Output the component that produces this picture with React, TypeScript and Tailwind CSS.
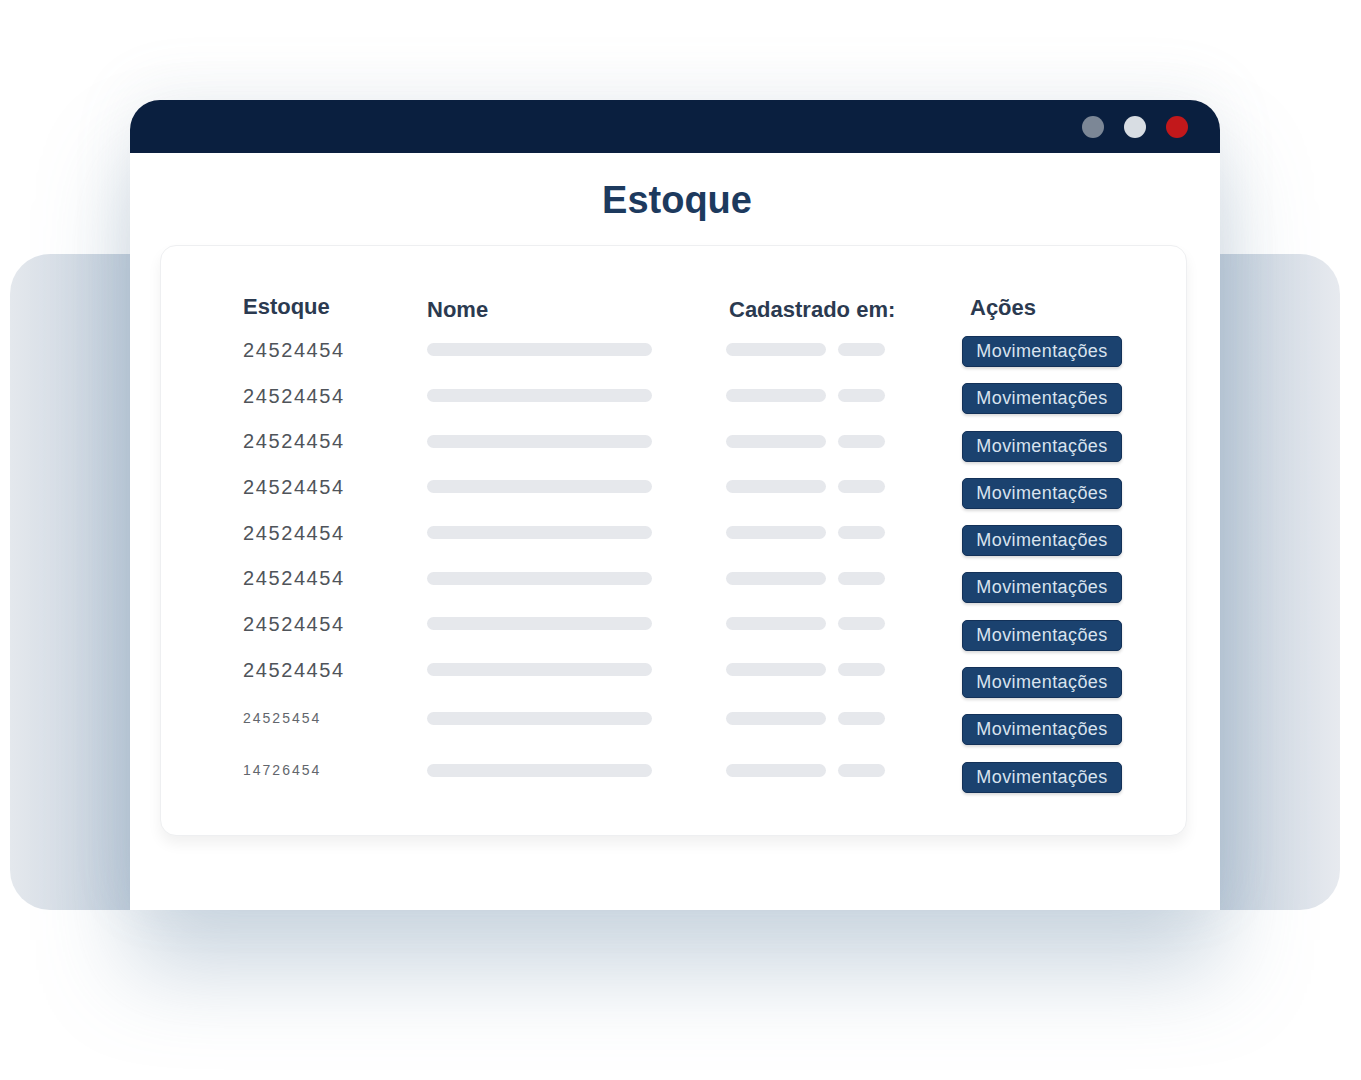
const rows = [
  { code: "24524454", h: "h-[45.7px]", small: false },
  { code: "24524454", h: "h-[45.7px]", small: false },
  { code: "24524454", h: "h-[45.7px]", small: false },
  { code: "24524454", h: "h-[45.7px]", small: false },
  { code: "24524454", h: "h-[45.7px]", small: false },
  { code: "24524454", h: "h-[45.7px]", small: false },
  { code: "24524454", h: "h-[45.7px]", small: false },
  { code: "24524454", h: "h-[45.7px]", small: false },
  { code: "24525454", h: "h-[51px]", small: true },
  { code: "14726454", h: "h-[53px]", small: true },
];

function Bar({ w }: { w: string }) {
  return <div className={`h-[13px] rounded-full bg-[#e6e8ec] ${w}`} />;
}

export default function App() {
  return (
    <main className="relative h-[1080px] w-full overflow-hidden bg-white font-['Liberation_Sans',Arial,sans-serif]">
      {/* painel de fundo atrás da janela */}
      <div className="absolute left-[10px] top-[254px] h-[656px] w-[1330px] rounded-[40px] bg-[linear-gradient(to_right,#e4e8ed_0%,#c8d3df_9%,#c8d3df_91%,#e7eaef_100%)]" />

      <div className="relative pl-[130px] pt-[100px]">
        <div className="flex h-[810px] w-[1090px] flex-col rounded-t-[30px] bg-white shadow-[0_60px_90px_rgba(110,140,170,0.35),0_-10px_60px_rgba(140,155,175,0.12)]">
          <div className="flex h-[53px] items-center justify-end gap-[20px] rounded-t-[30px] bg-[#0a1f3f] pr-[32px]">
            <span className="h-[22px] w-[22px] rounded-full bg-[#7c8796]" />
            <span className="h-[22px] w-[22px] rounded-full bg-[#d8dde3]" />
            <span className="h-[22px] w-[22px] rounded-full bg-[#c2181b]" />
          </div>

          <h1 className="mt-[24px] pl-[4px] text-center text-[38px] font-bold leading-[46px] text-[#1d3a5e]">
            Estoque
          </h1>

          <div className="ml-[30px] mt-[22px] w-[1027px] rounded-[16px] border border-[#eeeff1] bg-white pb-[38px] pl-[82px] pt-[49px] shadow-[0_8px_14px_rgba(0,0,0,0.06)]">
            <div className="flex">
              <div className="flex flex-col">
                <div className="grid h-[24px] grid-cols-[184px_299px_236px] items-center text-[22px] font-bold text-[#2b3a50]">
                  <span className="-translate-y-[5px]">Estoque</span>
                  <span className="-translate-y-[2px]">Nome</span>
                  <span className="-translate-y-[2px] pl-[3px]">Cadastrado em:</span>
                </div>
                <div className="mt-[8px] flex flex-col">
                  {rows.map((r, i) => (
                    <div
                      key={i}
                      className={`grid grid-cols-[184px_299px_236px] items-center ${r.h}`}
                    >
                      {r.small ? (
                        <span className="text-[14px] tracking-[2px] text-[#62666c]">{r.code}</span>
                      ) : (
                        <span className="text-[20px] tracking-[1.6px] text-[#4f545a]">{r.code}</span>
                      )}
                      <Bar w="w-[225px]" />
                      <div className="flex gap-[12px]">
                        <Bar w="w-[100px]" />
                        <Bar w="w-[47px]" />
                      </div>
                    </div>
                  ))}
                </div>
              </div>

              <div className="flex flex-col">
                <div className="flex h-[24px] items-center pl-[8px] text-[22px] font-bold text-[#2b3a50]">
                  Ações
                </div>
                <div className="mt-[17px] flex flex-col gap-[16.3px]">
                  {rows.map((_, i) => (
                    <button
                      key={i}
                      className="flex h-[31px] w-[160px] items-center justify-center rounded-[5px] border border-[#133158] bg-[#1b426f] text-[18px] tracking-[0.4px] text-[#d9e3ee] shadow-[0_2px_3px_rgba(0,0,0,0.15)]"
                    >
                      Movimentações
                    </button>
                  ))}
                </div>
              </div>
            </div>
          </div>
        </div>
      </div>
    </main>
  );
}
